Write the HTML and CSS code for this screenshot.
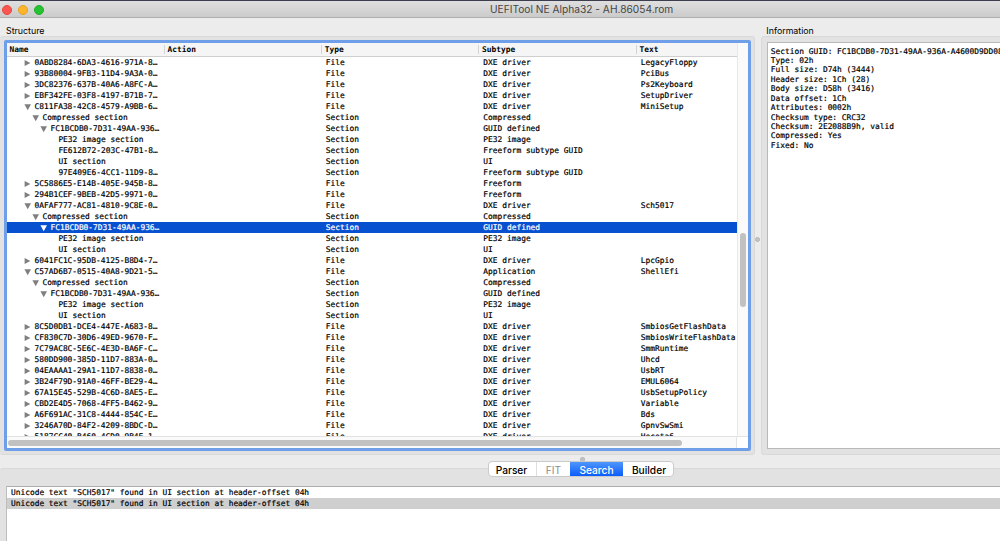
FILE: index.html
```html
<!DOCTYPE html>
<html lang="en">
<head>
    <meta charset="UTF-8">
    <title>UEFITool NE Alpha32 - AH.86054.rom</title>
    <link rel="stylesheet" href="styles.css">
</head>
<body>
    <div class="titlebar">
        <div class="lights">
            <span class="light red"></span>
            <span class="light yellow"></span>
            <span class="light green"></span>
        </div>
        <div class="title"><span>UEFITool NE Alpha32 - AH.86054.rom</span></div>
    </div>

    <div class="panels">
        <div class="structure">
            <div class="label"><span>Structure</span></div>
            <div class="group">
                <div class="tree">
                    <div class="view">
                        <div class="tree-head">
                            <span>Name</span>
                            <span>Action</span>
                            <span>Type</span>
                            <span>Subtype</span>
                            <span>Text</span>
                        </div>
                        <div class="rows" id="tree-rows"></div>
                    </div>
                    <div class="vscroll"><div class="vthumb"></div></div>
                    <div class="hscroll"><div class="hthumb"></div></div>
                    <div class="corner"></div>
                </div>
            </div>
        </div>

        <div class="splitter"><span class="dot"></span></div>

        <div class="information">
            <div class="label"><span>Information</span></div>
            <div class="group">
                <pre class="info">Section GUID: FC1BCDB0-7D31-49AA-936A-A4600D9DD083
Type: 02h
Full size: D74h (3444)
Header size: 1Ch (28)
Body size: D58h (3416)
Data offset: 1Ch
Attributes: 0002h
Checksum type: CRC32
Checksum: 2E2088B9h, valid
Compressed: Yes
Fixed: No</pre>
            </div>
        </div>
    </div>

    <div class="bottom">
        <span class="dot"></span>
        <div class="tabs">
            <div class="tab parser"><span>Parser</span></div>
            <div class="tab fit"><span>FIT</span></div>
            <div class="tab search"><span>Search</span></div>
            <div class="tab builder"><span>Builder</span></div>
        </div>
        <div class="messages-group">
            <div class="messages">
                <div class="message">Unicode text "SCH5017" found in UI section at header-offset 04h</div>
                <div class="message current">Unicode text "SCH5017" found in UI section at header-offset 04h</div>
            </div>
        </div>
    </div>

    <script>
        // level, arrow (0 none, 1 closed, 2 open), name, type, subtype, text
        const items = [
            [0, 1, "0ABD8284-6DA3-4616-971A-8…", "File", "DXE driver", "LegacyFloppy"],
            [0, 1, "93B80004-9FB3-11D4-9A3A-0…", "File", "DXE driver", "PciBus"],
            [0, 1, "3DC82376-637B-40A6-A8FC-A…", "File", "DXE driver", "Ps2Keyboard"],
            [0, 1, "EBF342FE-03F8-4197-B71B-7…", "File", "DXE driver", "SetupDriver"],
            [0, 2, "C811FA38-42C8-4579-A9BB-6…", "File", "DXE driver", "MiniSetup"],
            [1, 2, "Compressed section", "Section", "Compressed", ""],
            [2, 2, "FC1BCDB0-7D31-49AA-936…", "Section", "GUID defined", ""],
            [3, 0, "PE32 image section", "Section", "PE32 image", ""],
            [3, 0, "FE612B72-203C-47B1-8…", "Section", "Freeform subtype GUID", ""],
            [3, 0, "UI section", "Section", "UI", ""],
            [3, 0, "97E409E6-4CC1-11D9-8…", "Section", "Freeform subtype GUID", ""],
            [0, 1, "5C5886E5-E14B-405E-945B-8…", "File", "Freeform", ""],
            [0, 1, "294B1CEF-9BEB-42D5-9971-0…", "File", "Freeform", ""],
            [0, 2, "0AFAF777-AC81-4810-9C8E-0…", "File", "DXE driver", "Sch5017"],
            [1, 2, "Compressed section", "Section", "Compressed", ""],
            [2, 2, "FC1BCDB0-7D31-49AA-936…", "Section", "GUID defined", "", true],
            [3, 0, "PE32 image section", "Section", "PE32 image", ""],
            [3, 0, "UI section", "Section", "UI", ""],
            [0, 1, "6041FC1C-95DB-4125-B8D4-7…", "File", "DXE driver", "LpcGpio"],
            [0, 2, "C57AD6B7-0515-40A8-9D21-5…", "File", "Application", "ShellEfi"],
            [1, 2, "Compressed section", "Section", "Compressed", ""],
            [2, 2, "FC1BCDB0-7D31-49AA-936…", "Section", "GUID defined", ""],
            [3, 0, "PE32 image section", "Section", "PE32 image", ""],
            [3, 0, "UI section", "Section", "UI", ""],
            [0, 1, "8C5D0DB1-DCE4-447E-A683-8…", "File", "DXE driver", "SmbiosGetFlashData"],
            [0, 1, "CF830C7D-30D6-49ED-9670-F…", "File", "DXE driver", "SmbiosWriteFlashData"],
            [0, 1, "7C79AC8C-5E6C-4E3D-BA6F-C…", "File", "DXE driver", "SmmRuntime"],
            [0, 1, "580DD900-385D-11D7-883A-0…", "File", "DXE driver", "Uhcd"],
            [0, 1, "04EAAAA1-29A1-11D7-8838-0…", "File", "DXE driver", "UsbRT"],
            [0, 1, "3B24F79D-91A0-46FF-BE29-4…", "File", "DXE driver", "EMUL6064"],
            [0, 1, "67A15E45-529B-4C6D-8AE5-E…", "File", "DXE driver", "UsbSetupPolicy"],
            [0, 1, "CBD2E4D5-7068-4FF5-B462-9…", "File", "DXE driver", "Variable"],
            [0, 1, "A6F691AC-31C8-4444-854C-E…", "File", "DXE driver", "Bds"],
            [0, 1, "3246A70D-84F2-4209-8BDC-D…", "File", "DXE driver", "GpnvSwSmi"],
            [0, 1, "5187CC40-B460-4CD0-9B4E-1…", "File", "DXE driver", "Heceta6"]
        ];
        const arrows = [
            '',
            '<path d="M0.6 0.9 L6.4 4 L0.6 7.1 Z"/>',
            '<path d="M0.4 1.2 H7 L3.7 7.2 Z"/>'
        ];

        document.getElementById('tree-rows').innerHTML = items.map(([level, arrow, name, type, subtype, text, selected]) => `
            <div class="row level${level}${selected ? ' selected' : ''}">
                <div class="name"><svg class="arrow" width="8" height="8">${arrows[arrow]}</svg>${name}</div>
                <div></div>
                <div>${type}</div>
                <div>${subtype}</div>
                <div>${text}</div>
            </div>
        `).join('');
    </script>
</body>
</html>
```
FILE: styles.css
```css
* {
    box-sizing: border-box;
}
body {
    margin: 0;
    width: 1000px;
    height: 541px;
    overflow: hidden;
    display: flex;
    flex-direction: column;
    background-color: #ececec;
    color: #000;
    font-family: Inter, "Liberation Sans", sans-serif;
}

.titlebar {
    display: grid;
    grid-template-columns: 455px 1fr;
    align-items: center;
    height: 18px;
    padding-left: 2px;
    border-top: 1px solid #3c3d4e;
    border-bottom: 1px solid #b0b0b0;
    background: linear-gradient(#dfdfdf, #cbcbcb);
}
.lights {
    display: flex;
    gap: 5.75px;
    padding-top: 1px;
}
.light {
    width: 10px;
    height: 10px;
    border-radius: 50%;
}
.red {
    background-color: #fc5650;
    border: 1px solid #e9453f;
}
.yellow {
    background-color: #fdb62b;
    border: 1px solid #e6a11f;
}
.green {
    background-color: #27c232;
    border: 1px solid #1dad2a;
}
.title {
    padding: 1px 0 0 33px;
    font-size: 10.2px;
    line-height: 15px;
    color: #454545;
    white-space: nowrap;
}

.panels {
    display: flex;
    height: 437px;
}
.structure {
    width: 755px;
}
.label {
    height: 18px;
    padding: 7px 0 0 6px;
    font-size: 8.8px;
    line-height: 12px;
}
.group {
    height: 419px;
    border: 1px solid #d9d9d9;
    border-radius: 3px;
    background-color: #e2e2e2;
}
.structure .group {
    padding: 3px 3px 3px 4px;
    border-left: 0;
}
.tree {
    display: grid;
    grid-template-columns: 730px 11px;
    grid-template-rows: 393px 12px;
    width: 747px;
    height: 411px;
    border: 3px solid #6f9fe9;
    border-radius: 2px;
    background-color: #fff;
}
.view {
    overflow: hidden;
}
.tree-head,
.row {
    display: grid;
    grid-template-columns: 157px 157.5px 157.5px 157.5px 1fr;
    font-family: "DejaVu Sans Mono", monospace;
    font-size: 7.86px;
    white-space: pre;
    -webkit-text-stroke: 0.2px currentColor;
}
.tree-head {
    grid-template-columns: 156.5px 157.3px 157.3px 157.5px 1fr;
    height: 14px;
    padding: 2px 0;
    border-bottom: 1px solid #cfcfcf;
    background-color: #f5f5f5;
    line-height: 9px;
    font-weight: bold;
    -webkit-text-stroke: 0;
}
.tree-head span {
    padding-left: 3px;
    border-left: 1px solid #d4d4d4;
}
.tree-head span:first-child {
    padding-left: 2.5px;
    border-left: 0;
}
.row {
    height: 11px;
    line-height: 11px;
}
.row div {
    padding-left: 4.3px;
}
.row .name {
    display: flex;
    align-items: center;
    padding-left: 16.5px;
}
.level1 .name {
    padding-left: 24.5px;
}
.level2 .name {
    padding-left: 32.5px;
}
.level3 .name {
    padding-left: 40.4px;
}
.arrow {
    margin-right: 3px;
    fill: #7f7f7f;
}
.selected {
    background-color: #0750d0;
    color: #fff;
}
.selected .arrow {
    fill: #fff;
}
.vscroll {
    padding: 190px 0 0 2px;
    border-left: 1px solid #e8e8e8;
    background-color: #fafafa;
}
.vthumb {
    width: 6px;
    height: 74px;
    border-radius: 3px;
    background-color: #c1c1c1;
}
.hscroll {
    padding: 3px 0 0 1px;
    border-top: 1px solid #e2e2e2;
    border-right: 1px solid #e2e2e2;
    background-color: #fafafa;
}
.hthumb {
    width: 674px;
    height: 6px;
    border-radius: 3px;
    background-color: #c1c1c1;
}
.corner {
    border-top: 1px solid #e2e2e2;
}

.splitter {
    display: flex;
    align-items: center;
    justify-content: center;
    width: 6px;
    padding-top: 6px;
}
.dot {
    width: 5px;
    height: 5px;
    border-radius: 50%;
    background-color: #c4c4c4;
    border: 1px solid #b4b4b4;
}
.information {
    width: 245px;
    overflow: hidden;
}
.information .label {
    padding-left: 5.5px;
}
.information .group {
    width: 260px;
    padding: 5px;
}
.info {
    height: 407px;
    margin: 0;
    padding: 3.5px 3px;
    overflow: hidden;
    border: 1px solid #b9b9b9;
    background-color: #fff;
    font-family: "DejaVu Sans Mono", monospace;
    font-size: 7.86px;
    line-height: 9.44px;
    -webkit-text-stroke: 0.2px currentColor;
}

.bottom {
    display: flex;
    flex-direction: column;
    height: 86px;
}
.bottom > .dot {
    margin: 2px 0 -1px 580px;
}
.tabs {
    position: relative;
    display: flex;
    width: 186px;
    height: 17px;
    margin: 0 0 -9px 488px;
    overflow: hidden;
    border: 1px solid #cacaca;
    border-radius: 4px;
    background-color: #fff;
    font-size: 10.2px;
    font-weight: 500;
    line-height: 16px;
    text-align: center;
}
.parser {
    width: 48px;
    padding-right: 2px;
    border-right: 1px solid #dedede;
}
.fit {
    width: 33px;
    color: #8c8c8c;
    font-weight: 400;
}
.search {
    width: 53px;
    background: linear-gradient(#4f96fc, #0a5dfb);
    color: #fff;
}
.builder {
    width: 50px;
    padding-left: 2px;
}
.messages-group {
    height: 73px;
    padding: 17px 0 0 6px;
    border-top: 1px solid #d8d8d8;
    border-radius: 3px 0 0 0;
    background-color: #e2e2e2;
}
.messages {
    height: 60px;
    border-top: 1px solid #adadad;
    border-left: 1px solid #bdbdbd;
    background-color: #fff;
}
.message {
    height: 11px;
    padding-left: 4px;
    font-family: "DejaVu Sans Mono", monospace;
    font-size: 7.86px;
    line-height: 11px;
    -webkit-text-stroke: 0.2px currentColor;
}
.current {
    background-color: #cfcfcf;
}
```
